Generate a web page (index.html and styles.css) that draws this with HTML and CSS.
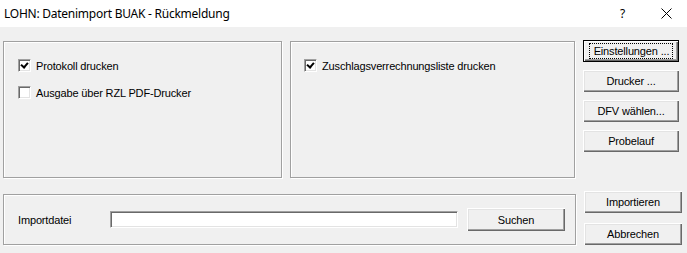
FILE: index.html
```html
<!DOCTYPE html>
<html lang="de">
<head>
    <meta charset="UTF-8">
    <title>LOHN: Datenimport BUAK - Rückmeldung</title>
    <link rel="stylesheet" href="styles.css">
</head>
<body>

    <div class="titlebar">
        <span class="title">LOHN: Datenimport BUAK - Rückmeldung</span>
        <span class="help">?</span>
        <svg class="close" width="11" height="11" viewBox="0 0 11 11">
            <path d="M0.5 0.5 L10.5 10.5 M10.5 0.5 L0.5 10.5" stroke="#000" stroke-width="1" fill="none"/>
        </svg>
    </div>

    <div class="dialog">
        <div class="top-row">
            <!-- Protokoll options -->
            <div class="group group-left">
                <label class="check-row">
                    <span class="checkbox checked"></span>
                    Protokoll drucken
                </label>
                <label class="check-row">
                    <span class="checkbox"></span>
                    Ausgabe über RZL PDF-Drucker
                </label>
            </div>

            <div class="group group-right">
                <label class="check-row">
                    <span class="checkbox checked"></span>
                    Zuschlagsverrechnungsliste drucken
                </label>
            </div>

            <div class="button-column">
                <button class="btn default"><span class="focus">Einstellungen ...</span></button>
                <button class="btn">Drucker ...</button>
                <button class="btn">DFV wählen...</button>
                <button class="btn">Probelauf</button>
            </div>
        </div>

        <div class="bottom-row">
            <div class="group group-file">
                <span class="file-label">Importdatei</span>
                <input class="file-input" type="text">
                <button class="btn btn-search">Suchen</button>
            </div>

            <div class="button-column bottom-buttons">
                <button class="btn wide">Importieren</button>
                <button class="btn wide">Abbrechen</button>
            </div>
        </div>
    </div>

</body>
</html>
```

FILE: styles.css
```css
body {
    margin: 0;
    width: 687px;
    height: 253px;
    overflow: hidden;
    background-color: #f0f0f0;
    font-family: "Liberation Sans", Arial, sans-serif;
    font-size: 11px;
    letter-spacing: -0.15px;
    color: #000;
}

/* Window title bar */
.titlebar {
    height: 27px;
    background-color: #fff;
    display: flex;
    align-items: center;
    padding-left: 4px;
}

.title {
    font-family: "Noto Sans", sans-serif;
    font-size: 12px;
    letter-spacing: -0.25px;
    flex: 1;
    margin-top: -1px;
}

.help {
    font-family: "Noto Sans", sans-serif;
    font-size: 12px;
    margin-right: 36px;
    margin-top: -1px;
}

.close {
    margin-right: 15px;
    margin-top: -1px;
}

.dialog {
    padding: 0 0 0 3px;
}

.top-row {
    display: flex;
    margin-top: 14px;
    height: 137px;
}

.bottom-row {
    display: flex;
    margin-top: 16px;
}

/* Etched group boxes */
.group {
    box-sizing: border-box;
    border: 1px solid #a0a0a0;
    box-shadow: inset 1px 1px 0 #fff, 1px 1px 0 #fff;
}

.group-left {
    width: 279px;
    padding: 17px 0 0 14px;
}

.group-right {
    width: 285px;
    margin-left: 8px;
    padding: 17px 0 0 13px;
}

.group-file {
    width: 573px;
    height: 51px;
    display: flex;
    align-items: center;
    padding-left: 14px;
}

.check-row {
    display: flex;
    align-items: center;
    height: 13px;
    margin-bottom: 14px;
    white-space: nowrap;
}

.checkbox {
    box-sizing: border-box;
    width: 13px;
    height: 13px;
    margin-right: 5px;
    background-color: #fff;
    border-top: 1px solid #a0a0a0;
    border-left: 1px solid #a0a0a0;
    border-right: 1px solid #fff;
    border-bottom: 1px solid #fff;
    box-shadow: inset 1px 1px 0 #696969, inset -1px -1px 0 #e3e3e3;
    position: relative;
}

/* Check mark drawn with borders */
.checkbox.checked::after {
    content: "";
    position: absolute;
    left: 3px;
    top: 1px;
    width: 3px;
    height: 5px;
    border-right: 2px solid #000;
    border-bottom: 2px solid #000;
    transform: rotate(40deg);
}

/* Classic 3D push buttons */
.button-column {
    display: flex;
    flex-direction: column;
    gap: 8px;
    margin-left: 8px;
    margin-top: -1px;
}

.btn {
    box-sizing: border-box;
    width: 96px;
    height: 22px;
    padding: 0;
    font-family: "Liberation Sans", Arial, sans-serif;
    font-size: 11px;
    letter-spacing: -0.15px;
    color: #000;
    background-color: #f0f0f0;
    border: none;
    box-shadow: inset 1px 1px 0 #fff, inset -1px -1px 0 #696969, inset -2px -2px 0 #a0a0a0, inset 2px 2px 0 #e3e3e3;
}

.btn.default {
    box-shadow: inset 0 0 0 1px #000, inset 2px 2px 0 #fff, inset -2px -2px 0 #696969, inset -3px -3px 0 #a0a0a0;
}

.focus {
    display: inline-block;
    border: 1px dotted #000;
    padding: 1px 3px 1px 4px;
    line-height: 12px;
}

.bottom-buttons {
    margin-top: -3px;
    gap: 10px;
}

.btn.wide {
    width: 98px;
}

.file-label {
    width: 92px;
}

.file-input {
    box-sizing: border-box;
    width: 348px;
    height: 17px;
    margin: 0 9px 0 0;
    padding: 0;
    background-color: #fff;
    border-top: 1px solid #a0a0a0;
    border-left: 1px solid #a0a0a0;
    border-right: 1px solid #fff;
    border-bottom: 1px solid #fff;
    box-shadow: inset 1px 1px 0 #696969, inset -1px -1px 0 #e3e3e3;
    outline: none;
}

.btn-search {
    width: 98px;
    height: 23px;
}
```
